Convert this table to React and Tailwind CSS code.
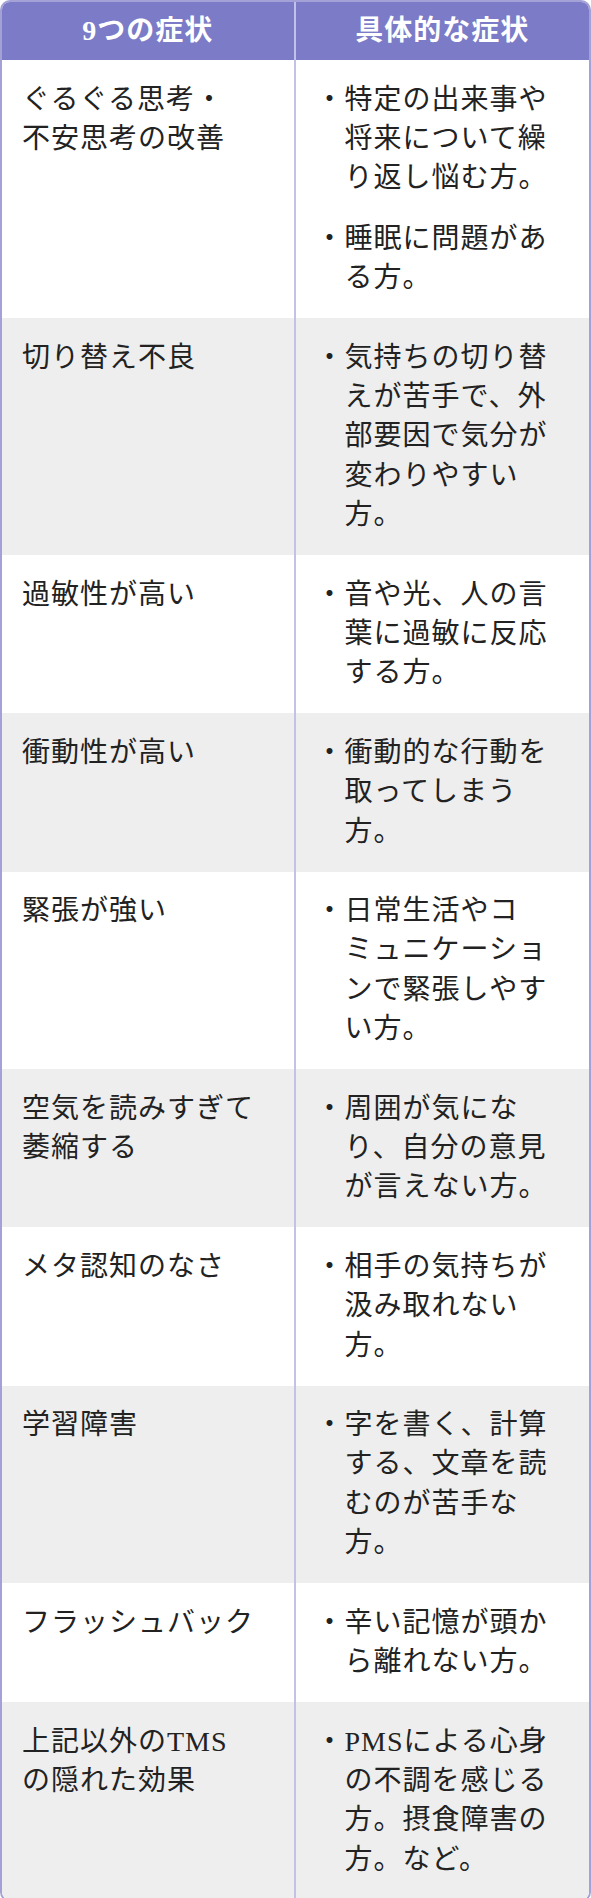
import React from "react";

const rows = [
  { left: ["ぐるぐる思考・", "不安思考の改善"], right: [["特定の出来事や", "将来について繰", "り返し悩む方。"], ["睡眠に問題があ", "る方。"]] },
  { left: ["切り替え不良"], right: [["気持ちの切り替", "えが苦手で、外", "部要因で気分が", "変わりやすい", "方。"]] },
  { left: ["過敏性が高い"], right: [["音や光、人の言", "葉に過敏に反応", "する方。"]] },
  { left: ["衝動性が高い"], right: [["衝動的な行動を", "取ってしまう", "方。"]] },
  { left: ["緊張が強い"], right: [["日常生活やコ", "ミュニケーショ", "ンで緊張しやす", "い方。"]] },
  { left: ["空気を読みすぎて", "萎縮する"], right: [["周囲が気にな", "り、自分の意見", "が言えない方。"]] },
  { left: ["メタ認知のなさ"], right: [["相手の気持ちが", "汲み取れない", "方。"]] },
  { left: ["学習障害"], right: [["字を書く、計算", "する、文章を読", "むのが苦手な", "方。"]] },
  { left: ["フラッシュバック"], right: [["辛い記憶が頭か", "ら離れない方。"]] },
  { left: ["上記以外のTMS", "の隠れた効果"], right: [["PMSによる心身", "の不調を感じる", "方。摂食障害の", "方。など。"]] },
];

function Lines({ lines }) {
  return (
    <div className="whitespace-nowrap">
      {lines.map((l, i) => (
        <div key={i}>{l}</div>
      ))}
    </div>
  );
}

export default function App() {
  return (
    <div
      className="w-[591px] text-[#222] text-[28px] leading-[39.4px] tracking-[1px]"
      style={{ fontFamily: '"Liberation Serif", "Noto Sans CJK JP", serif' }}
    >
      <div className="border-2 border-[#a3a1d6] rounded-[10px] overflow-hidden">
        <div className="grid grid-cols-2 bg-[#7b7bc7] text-white font-bold h-[58px]">
          <div className="flex items-center justify-center border-r-2 border-[#c3c1e8]">9つの症状</div>
          <div className="flex items-center justify-center">具体的な症状</div>
        </div>
        {rows.map((r, i) => (
          <div key={i} className={"grid grid-cols-2 " + (i % 2 === 1 ? "bg-[#eeeeee]" : "bg-white")}>
            <div className="border-r-2 border-[#c3c1e8] pl-5 pt-[19.5px] pb-[20.5px]">
              <Lines lines={r.left} />
            </div>
            <div className="pl-[20px] pt-[19.5px] pb-[20.5px] flex flex-col gap-[21px]">
              {r.right.map((item, j) => (
                <div key={j} className="flex">
                  <span className="shrink-0">・</span>
                  <Lines lines={item} />
                </div>
              ))}
            </div>
          </div>
        ))}
      </div>
    </div>
  );
}
